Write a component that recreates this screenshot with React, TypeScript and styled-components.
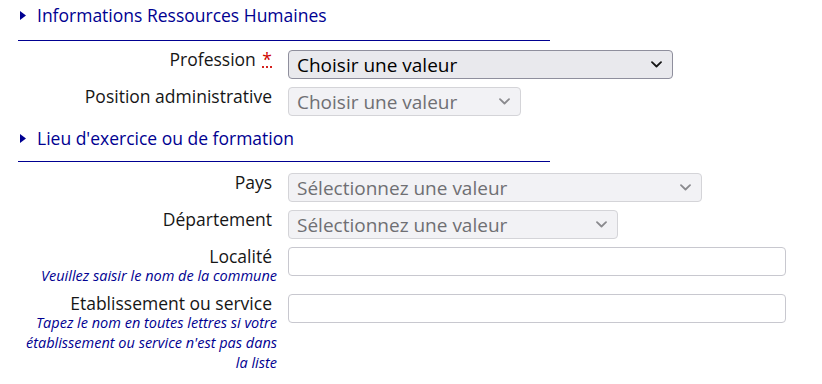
import React from "react";
import styled, { createGlobalStyle } from "styled-components";

const GlobalStyle = createGlobalStyle`
  body {
    margin: 0;
    background: #ffffff;
    font-family: "Open Sans", "Noto Sans", sans-serif;
    color: #161616;
  }
`;

const Page = styled.div`
  padding: 4px 0 0 18px;
`;

const Section = styled.section<{ $first?: boolean }>`
  padding-top: ${(p) => (p.$first ? "0" : "3px")};
`;

const SectionTitle = styled.h2<{ $gap: number }>`
  display: flex;
  align-items: center;
  gap: 11px;
  margin: 0 0 ${(p) => p.$gap}px 2px;
  font-size: 17.5px;
  line-height: 22px;
  font-weight: 400;
  color: #000091;
`;

const Rule = styled.div<{ $gap: number }>`
  width: 532px;
  border-bottom: 1px solid #000091;
  margin-bottom: ${(p) => p.$gap}px;
`;

const Row = styled.div`
  display: grid;
  grid-template-columns: 259px 1fr;
  column-gap: 11px;
  margin-bottom: 8px;
`;

const LabelCell = styled.div`
  text-align: right;
`;

const Label = styled.label`
  display: block;
  padding-right: 5px;
  font-size: 17.5px;
  line-height: 19px;
  color: #161616;
`;

const Required = styled.abbr`
  color: #ce0500;
  text-decoration: underline dotted #ce0500;
  margin-left: 2px;
`;

const Help = styled.p`
  margin: 0;
  font-size: 14.5px;
  line-height: 20px;
  font-style: italic;
  color: #000091;
`;

const SelectBox = styled.div<{ $width: number; $disabled?: boolean }>`
  box-sizing: border-box;
  width: ${(p) => p.$width}px;
  height: 29px;
  display: flex;
  align-items: center;
  justify-content: space-between;
  padding: 0 10px 0 8px;
  border: 1px solid ${(p) => (p.$disabled ? "#d4d4d8" : "#8f8f9d")};
  border-radius: 4px;
  background: ${(p) => (p.$disabled ? "#f2f2f5" : "#e9e9ed")};
  color: ${(p) => (p.$disabled ? "#6f6f73" : "#000000")};
  font-size: 19px;

  svg {
    flex: none;
  }
`;

const TextInput = styled.input`
  box-sizing: border-box;
  width: 498px;
  height: 29px;
  border: 1px solid #c8c8cf;
  border-radius: 4px;
  background: #ffffff;
  font: inherit;
`;

const Chevron = ({ color }: { color: string }) => (
  <svg width="11" height="7" viewBox="0 0 11 7">
    <path d="M1 1.2 L5.5 5.5 L10 1.2" fill="none" stroke={color} strokeWidth="1.8" strokeLinecap="round" strokeLinejoin="round" />
  </svg>
);

const Triangle = () => (
  <svg width="6" height="9" viewBox="0 0 6 9">
    <path d="M0 0 L6 4.5 L0 9 Z" fill="#000091" />
  </svg>
);

const Select = ({ text, width, disabled }: { text: string; width: number; disabled?: boolean }) => (
  <SelectBox $width={width} $disabled={disabled}>
    <span>{text}</span>
    <Chevron color={disabled ? "#8a8a8e" : "#161616"} />
  </SelectBox>
);

export default function App() {
  return (
    <>
      <GlobalStyle />
      <Page>
        <Section $first>
          <SectionTitle $gap={14}>
            <Triangle />
            Informations Ressources Humaines
          </SectionTitle>
          <Rule $gap={9} />
          <Row>
            <LabelCell>
              <Label>
                Profession <Required title="obligatoire">*</Required>
              </Label>
            </LabelCell>
            <Select text="Choisir une valeur" width={385} />
          </Row>
          <Row>
            <LabelCell>
              <Label>Position administrative</Label>
            </LabelCell>
            <Select text="Choisir une valeur" width={233} disabled />
          </Row>
        </Section>

        <Section>
          <SectionTitle $gap={12}>
            <Triangle />
            Lieu d'exercice ou de formation
          </SectionTitle>
          <Rule $gap={11} />
          <Row>
            <LabelCell>
              <Label>Pays</Label>
            </LabelCell>
            <Select text="Sélectionnez une valeur" width={414} disabled />
          </Row>
          <Row>
            <LabelCell>
              <Label>Département</Label>
            </LabelCell>
            <Select text="Sélectionnez une valeur" width={330} disabled />
          </Row>
          <Row>
            <LabelCell>
              <Label>Localité</Label>
              <Help>Veuillez saisir le nom de la commune</Help>
            </LabelCell>
            <TextInput />
          </Row>
          <Row>
            <LabelCell>
              <Label>Etablissement ou service</Label>
              <Help>Tapez le nom en toutes lettres si votre établissement ou service n'est pas dans la liste</Help>
            </LabelCell>
            <TextInput />
          </Row>
        </Section>
      </Page>
    </>
  );
}
